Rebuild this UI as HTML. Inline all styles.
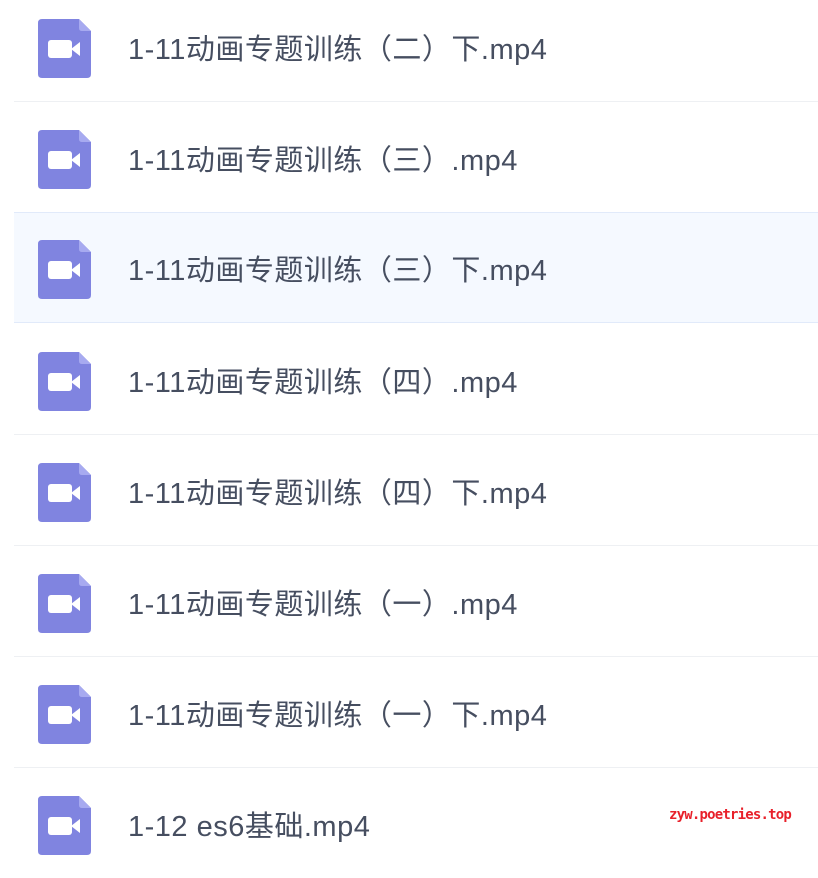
<!DOCTYPE html>
<html><head><meta charset="utf-8"><style>
body{margin:0;width:818px;height:852px;overflow:hidden;background:#fff;font-family:"Liberation Sans","Noto Sans CJK SC",sans-serif;position:relative}
.row{position:absolute;left:14px;width:804px;height:110px;border-bottom:1px solid #eef0f3}
.row.h{background:#f5f9ff;border-top:1px solid #e1eafa;border-bottom:1px solid #e1eafa;height:109px}
.ic{position:absolute;left:24px;top:28px;width:53px;height:59px}
.h .ic{top:27px}
.t{position:absolute;left:114px;top:41px;font-size:29px;letter-spacing:0.5px;color:#464e60;line-height:36px;white-space:nowrap}
.h .t{top:40px}
.wm{position:absolute;left:669px;top:807px;font-size:14px;font-weight:bold;color:#e8202a;font-family:"DejaVu Sans Mono",monospace;letter-spacing:-0.8px}
</style></head><body>
<div class="row" style="top:-9px"><svg class="ic" viewBox="0 0 53 59"><path d="M4 0H41L53 12V55Q53 59 49 59H4Q0 59 0 55V4Q0 0 4 0Z" fill="#8084e0"/><path d="M41 0L53 12H44Q41 12 41 9Z" fill="#a7aaf0"/><rect x="10" y="21" width="24" height="18" rx="3" fill="#fff"/><path d="M33 30L42 23V37Z" fill="#fff"/></svg><div class="t">1-11动画专题训练（二）下.mp4</div></div>
<div class="row" style="top:102px"><svg class="ic" viewBox="0 0 53 59"><path d="M4 0H41L53 12V55Q53 59 49 59H4Q0 59 0 55V4Q0 0 4 0Z" fill="#8084e0"/><path d="M41 0L53 12H44Q41 12 41 9Z" fill="#a7aaf0"/><rect x="10" y="21" width="24" height="18" rx="3" fill="#fff"/><path d="M33 30L42 23V37Z" fill="#fff"/></svg><div class="t">1-11动画专题训练（三）.mp4</div></div>
<div class="row h" style="top:212px"><svg class="ic" viewBox="0 0 53 59"><path d="M4 0H41L53 12V55Q53 59 49 59H4Q0 59 0 55V4Q0 0 4 0Z" fill="#8084e0"/><path d="M41 0L53 12H44Q41 12 41 9Z" fill="#a7aaf0"/><rect x="10" y="21" width="24" height="18" rx="3" fill="#fff"/><path d="M33 30L42 23V37Z" fill="#fff"/></svg><div class="t">1-11动画专题训练（三）下.mp4</div></div>
<div class="row" style="top:324px"><svg class="ic" viewBox="0 0 53 59"><path d="M4 0H41L53 12V55Q53 59 49 59H4Q0 59 0 55V4Q0 0 4 0Z" fill="#8084e0"/><path d="M41 0L53 12H44Q41 12 41 9Z" fill="#a7aaf0"/><rect x="10" y="21" width="24" height="18" rx="3" fill="#fff"/><path d="M33 30L42 23V37Z" fill="#fff"/></svg><div class="t">1-11动画专题训练（四）.mp4</div></div>
<div class="row" style="top:435px"><svg class="ic" viewBox="0 0 53 59"><path d="M4 0H41L53 12V55Q53 59 49 59H4Q0 59 0 55V4Q0 0 4 0Z" fill="#8084e0"/><path d="M41 0L53 12H44Q41 12 41 9Z" fill="#a7aaf0"/><rect x="10" y="21" width="24" height="18" rx="3" fill="#fff"/><path d="M33 30L42 23V37Z" fill="#fff"/></svg><div class="t">1-11动画专题训练（四）下.mp4</div></div>
<div class="row" style="top:546px"><svg class="ic" viewBox="0 0 53 59"><path d="M4 0H41L53 12V55Q53 59 49 59H4Q0 59 0 55V4Q0 0 4 0Z" fill="#8084e0"/><path d="M41 0L53 12H44Q41 12 41 9Z" fill="#a7aaf0"/><rect x="10" y="21" width="24" height="18" rx="3" fill="#fff"/><path d="M33 30L42 23V37Z" fill="#fff"/></svg><div class="t">1-11动画专题训练（一）.mp4</div></div>
<div class="row" style="top:657px"><svg class="ic" viewBox="0 0 53 59"><path d="M4 0H41L53 12V55Q53 59 49 59H4Q0 59 0 55V4Q0 0 4 0Z" fill="#8084e0"/><path d="M41 0L53 12H44Q41 12 41 9Z" fill="#a7aaf0"/><rect x="10" y="21" width="24" height="18" rx="3" fill="#fff"/><path d="M33 30L42 23V37Z" fill="#fff"/></svg><div class="t">1-11动画专题训练（一）下.mp4</div></div>
<div class="row" style="top:768px;border-bottom:none"><svg class="ic" viewBox="0 0 53 59"><path d="M4 0H41L53 12V55Q53 59 49 59H4Q0 59 0 55V4Q0 0 4 0Z" fill="#8084e0"/><path d="M41 0L53 12H44Q41 12 41 9Z" fill="#a7aaf0"/><rect x="10" y="21" width="24" height="18" rx="3" fill="#fff"/><path d="M33 30L42 23V37Z" fill="#fff"/></svg><div class="t">1-12 es6基础.mp4</div></div>
<div class="wm">zyw.poetries.top</div>
</body></html>
